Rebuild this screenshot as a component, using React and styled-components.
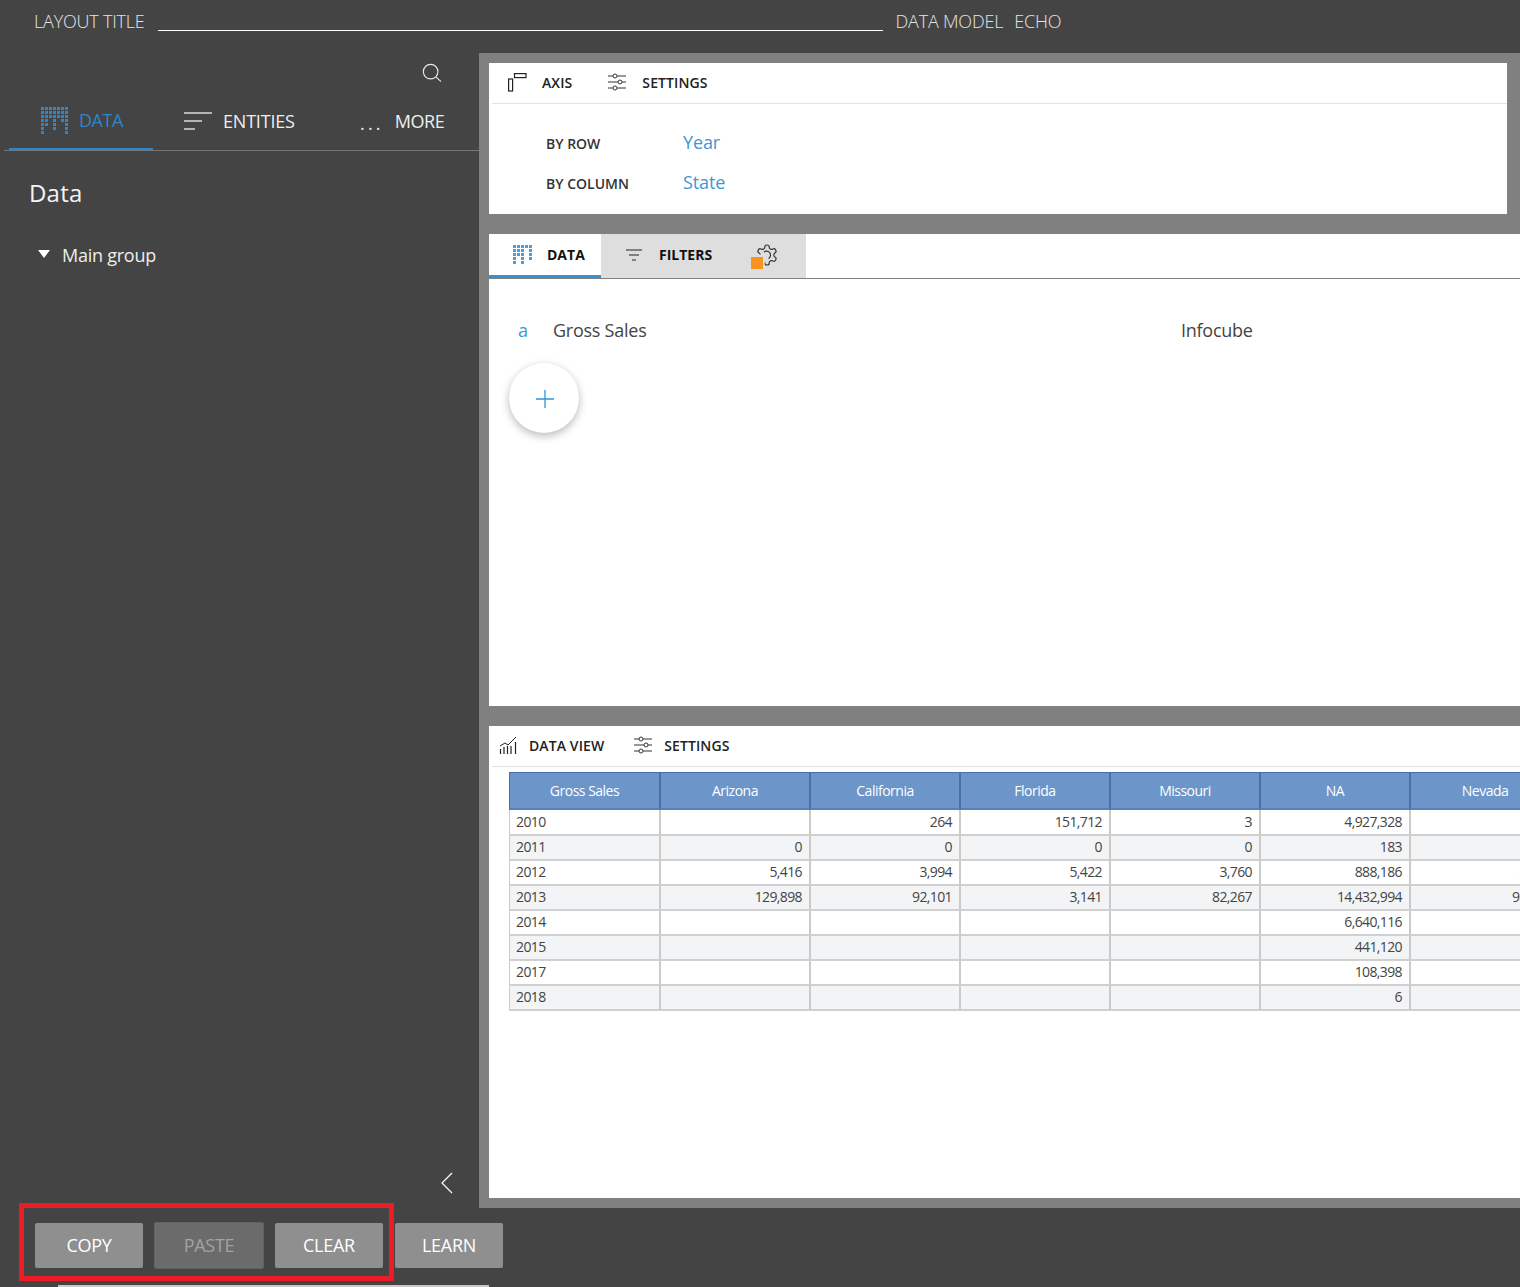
import React from "react";
import styled, { createGlobalStyle } from "styled-components";

const GlobalStyle = createGlobalStyle`
  html, body {
    margin: 0;
    padding: 0;
    background: #444444;
    font-family: "Open Sans", "Liberation Sans", sans-serif;
  }
  * {
    box-sizing: border-box;
  }
`;

const Page = styled.div`
  width: 1520px;
  height: 1287px;
  position: relative;
  overflow: hidden;
  display: flex;
  flex-direction: column;
  background: #444444;
`;

const TopBar = styled.div`
  height: 53px;
  flex: none;
  display: flex;
  align-items: flex-start;
  padding: 9px 0 0 34px;
  font-size: 18px;
  font-weight: 300;
  line-height: 24px;
  letter-spacing: -0.2px;
  color: #e4e4e4;
`;

const TitleInput = styled.div`
  width: 725px;
  height: 22px;
  margin: 0 13px 0 13px;
  border-bottom: 1px solid #ffffff;
`;

const ModelName = styled.span`
  margin-left: 11px;
`;

const Middle = styled.div`
  height: 1155px;
  flex: none;
  display: flex;
`;

const Sidebar = styled.div`
  width: 479px;
  flex: none;
  display: flex;
  flex-direction: column;
  color: #ffffff;
`;

const SearchRow = styled.div`
  height: 47px;
  flex: none;
  display: flex;
  justify-content: flex-end;
  padding: 10px 37px 0 0;
`;

const SideTabs = styled.div`
  height: 51px;
  flex: none;
  margin-left: 4px;
  display: flex;
  border-bottom: 1px solid #757575;
`;

const SideTab = styled.div`
  height: 50px;
  width: ${(p) => p.$width}px;
  flex: none;
  display: flex;
  align-items: center;
  gap: ${(p) => p.$gap}px;
  margin-left: ${(p) => p.$left || 0}px;
  padding: 0 0 8px ${(p) => p.$pad}px;
  font-size: 18px;
  letter-spacing: ${(p) => p.$spacing || -0.45}px;
  color: ${(p) => (p.$active ? "#2e86c9" : "#eeeeee")};
  border-bottom: ${(p) => (p.$active ? "2px solid #2e86c9" : "none")};
`;

const Dots = styled.span`
  font-size: 18px;
  letter-spacing: 3.2px;
  line-height: 18px;
  padding-top: 4px;
  color: #eeeeee;
`;

const SideHeading = styled.div`
  margin: 25px 0 0 29px;
  font-size: 24px;
  line-height: 33px;
  letter-spacing: 0.2px;
  color: #f4f4f4;
`;

const TreeRow = styled.div`
  margin: 34px 0 0 38px;
  display: flex;
  align-items: center;
  gap: 12px;
  font-size: 18px;
  line-height: 24px;
  letter-spacing: -0.25px;
  color: #eeeeee;
`;

const Caret = styled.span`
  width: 0;
  height: 0;
  margin-bottom: 2px;
  border-left: 6px solid transparent;
  border-right: 6px solid transparent;
  border-top: 8px solid #ffffff;
`;

const CollapseRow = styled.div`
  margin-top: auto;
  height: 37px;
  display: flex;
  justify-content: flex-end;
  padding: 0 25px 0 0;
`;

const Workspace = styled.div`
  flex: 1;
  min-width: 0;
  display: flex;
  flex-direction: column;
  gap: 20px;
  padding: 10px 0 10px 10px;
  background: #808080;
  overflow: hidden;
`;

const Panel = styled.div`
  flex: none;
  height: ${(p) => p.$height}px;
  width: ${(p) => p.$width}px;
  background: #ffffff;
  color: #333333;
`;

const PanelBar = styled.div`
  height: 41px;
  margin-left: 3px;
  display: flex;
  align-items: center;
  padding: 0 0 2px ${(p) => p.$pad}px;
  border-bottom: 1px solid #e2e2e2;
`;

const BarItem = styled.div`
  display: flex;
  align-items: center;
  gap: ${(p) => p.$gap}px;
  margin-right: ${(p) => p.$right || 0}px;
  font-size: 14px;
  font-weight: 600;
  letter-spacing: 0.1px;
  color: #222222;
`;

const AxisGrid = styled.div`
  display: grid;
  grid-template-columns: 137px auto;
  grid-auto-rows: 40px;
  justify-content: start;
  align-items: center;
  padding: 18px 0 0 57px;
`;

const AxisLabel = styled.div`
  font-size: 14px;
  font-weight: 600;
  color: #333333;
  padding-top: 2px;
`;

const AxisValue = styled.div`
  font-size: 18px;
  color: #3f96d6;
  letter-spacing: -0.1px;
`;

const TabStrip = styled.div`
  height: 45px;
  display: flex;
  border-bottom: 1px solid #808080;
`;

const DataTab = styled.div`
  width: 112px;
  height: 44px;
  display: flex;
  align-items: center;
  gap: 15px;
  padding-left: 24px;
  font-size: 14px;
  font-weight: 700;
  color: #111111;
  border-bottom: 3px solid #3a8fd0;
`;

const GreyTabs = styled.div`
  width: 205px;
  height: 44px;
  display: flex;
  align-items: center;
  gap: 17px;
  padding: 0 0 3px 25px;
  background: #dedede;
  font-size: 14px;
  font-weight: 700;
  color: #111111;
`;

const GearWrap = styled.div`
  position: relative;
  width: 30px;
  height: 30px;
  margin-left: 21px;
`;

const GearGlyph = styled.svg`
  position: absolute;
  left: 5px;
  top: 3px;
`;

const OrangeBadge = styled.span`
  position: absolute;
  left: 1px;
  bottom: 1px;
  width: 12px;
  height: 12px;
  background: #f7941d;
`;

const DataRow = styled.div`
  display: flex;
  align-items: center;
  height: 24px;
  margin-top: 39px;
  padding-left: 29px;
  font-size: 18px;
  letter-spacing: -0.25px;
  color: #444444;
`;

const RowLetter = styled.span`
  width: 35px;
  color: #3f96d6;
`;

const RowName = styled.span`
  width: 628px;
`;

const AddButton = styled.div`
  width: 70px;
  height: 70px;
  margin: 21px 0 0 20px;
  padding: 2px 0 0 2px;
  border-radius: 50%;
  background: #ffffff;
  box-shadow: 0 3px 8px rgba(0, 0, 0, 0.28);
  display: flex;
  align-items: center;
  justify-content: center;
`;

const TableWrap = styled.div`
  padding: 5px 0 0 20px;
`;

const Table = styled.table`
  border-collapse: separate;
  border-spacing: 0;
  table-layout: fixed;
  width: 1202px;
  font-size: 14px;
  letter-spacing: -0.62px;
  color: #444444;
`;

const HeadCell = styled.th`
  width: 150px;
  height: 38px;
  padding: 0 0 1px;
  border-top: 1px solid #4a6ea8;
  border-right: 2px solid #4a6ea8;
  border-bottom: 2px solid #5a80b8;
  background: #6c95c9;
  color: #ffffff;
  font-weight: 400;
  letter-spacing: -0.5px;
  text-align: center;
  overflow: hidden;
  white-space: nowrap;

  &:first-child {
    width: 152px;
    border-left: 1px solid #4a6ea8;
  }
`;

const Cell = styled.td`
  height: ${(p) => (p.$first ? 26 : 25)}px;
  padding: 0 7px 2px 6px;
  border-right: 2px solid #cbcbcb;
  border-bottom: 2px solid #d0d0d0;
  text-align: ${(p) => (p.$left ? "left" : "right")};
  background: ${(p) => (p.$odd ? "#f3f4f6" : "#ffffff")};
  white-space: nowrap;

  &:first-child {
    border-left: 1px solid #cbcbcb;
  }
`;

const BottomBar = styled.div`
  height: 79px;
  flex: none;
  display: flex;
  padding: 15px 0 0 35px;
  gap: 11px;
  position: relative;
`;

const ActionButton = styled.div`
  width: ${(p) => (p.$disabled ? 110 : 108)}px;
  height: ${(p) => (p.$disabled ? 47 : 45)}px;
  margin-top: ${(p) => (p.$disabled ? -1 : 0)}px;
  margin-right: ${(p) => p.$right || 0}px;
  display: flex;
  align-items: center;
  justify-content: center;
  padding-bottom: 2px;
  border-radius: 2px;
  font-size: 18px;
  letter-spacing: -0.25px;
  background: ${(p) => (p.$disabled ? "#6b6b6b" : "#8f8f8f")};
  color: ${(p) => (p.$disabled ? "#a3a3a3" : "#ffffff")};
  border: ${(p) => (p.$disabled ? "1px solid #626262" : "none")};
`;

const Highlight = styled.div`
  position: absolute;
  left: 19px;
  top: -5px;
  width: 375px;
  height: 78px;
  border: 5px solid #ed1c24;
  pointer-events: none;
`;

const BottomEdge = styled.div`
  position: absolute;
  left: 58px;
  bottom: 0;
  width: 431px;
  height: 2px;
  background: #c9c9c9;
`;

const bigDots = [
  "1111111",
  "1111111",
  "1111111",
  "1101011",
  "1101001",
  "1001001",
  "1000001",
];

const smallDots = [
  "11111",
  "11101",
  "11101",
  "10101",
  "10100",
];

function DotGrid({ rows, color }) {
  const dots = [];
  rows.forEach((row, y) =>
    row.split("").forEach((on, x) => {
      if (on === "1") {
        dots.push(<rect key={x + "-" + y} x={x * 4} y={y * 4} width="3" height="3" fill={color} />);
      }
    })
  );
  const size = rows.length * 4 - 1;
  return (
    <svg width={size} height={size} viewBox={`0 0 ${size} ${size}`}>
      {dots}
    </svg>
  );
}

const SearchIcon = () => (
  <svg width="20" height="20" viewBox="0 0 22 22" fill="none" stroke="#e8e8e8" strokeWidth="1.2">
    <circle cx="9.5" cy="9.5" r="8" />
    <path d="M15.5 15.5l5.5 5" />
  </svg>
);

const EntitiesIcon = () => (
  <svg width="28" height="18" viewBox="0 0 28 18" stroke="#d8d8d8" strokeWidth="1.3">
    <path d="M0 1h28M0 9h18M0 17h11" />
  </svg>
);

const AxisIcon = () => (
  <svg width="19" height="19" viewBox="0 0 19 19" fill="none" stroke="#222" strokeWidth="1.2">
    <rect x="6.5" y="0.6" width="11.5" height="4" />
    <rect x="0.6" y="6" width="4" height="12" />
  </svg>
);

const SlidersIcon = () => (
  <svg width="18" height="18" viewBox="0 0 18 18" fill="none" stroke="#333" strokeWidth="1">
    <path d="M0 3h5M9 3h9M0 9h10M14 9h4M0 15h5M9 15h9" />
    <circle cx="7" cy="3" r="2" />
    <circle cx="12" cy="9" r="2" />
    <circle cx="7" cy="15" r="2" />
  </svg>
);

const FilterIcon = () => (
  <svg width="16" height="12" viewBox="0 0 16 12" stroke="#222" strokeWidth="1.2">
    <path d="M0 1h16M3 6h10M6 11h4" />
  </svg>
);

const GearIcon = () => (
  <GearGlyph width="24" height="24" viewBox="0 0 24 24" fill="none" stroke="#333" strokeWidth="1.2">
    <defs>
      <clipPath id="gear-cut">
        <path d="M0 0H24V24H9L11 13 3 11 0 11z" />
      </clipPath>
    </defs>
    <g clipPath="url(#gear-cut)">
      <path d="M12.22 2h-.44a2 2 0 0 0-2 2v.18a2 2 0 0 1-1 1.73l-.43.25a2 2 0 0 1-2 0l-.15-.08a2 2 0 0 0-2.73.73l-.22.38a2 2 0 0 0 .73 2.73l.15.1a2 2 0 0 1 1 1.72v.51a2 2 0 0 1-1 1.74l-.15.09a2 2 0 0 0-.73 2.73l.22.38a2 2 0 0 0 2.73.73l.15-.08a2 2 0 0 1 2 0l.43.25a2 2 0 0 1 1 1.73V20a2 2 0 0 0 2 2h.44a2 2 0 0 0 2-2v-.18a2 2 0 0 1 1-1.73l.43-.25a2 2 0 0 1 2 0l.15.08a2 2 0 0 0 2.73-.73l.22-.39a2 2 0 0 0-.73-2.73l-.15-.08a2 2 0 0 1-1-1.74v-.5a2 2 0 0 1 1-1.74l.15-.09a2 2 0 0 0 .73-2.73l-.22-.38a2 2 0 0 0-2.73-.73l-.15.08a2 2 0 0 1-2 0l-.43-.25a2 2 0 0 1-1-1.73V4a2 2 0 0 0-2-2z" />
    </g>
    <path d="M9 9a4 4 0 0 1 6.5 3.5a4 4 0 0 1-2 3" />
  </GearGlyph>
);

const PlusIcon = () => (
  <svg width="20" height="20" viewBox="0 0 20 20" stroke="#2f93dc" strokeWidth="1.3">
    <path d="M10 1v18M1 10h18" />
  </svg>
);

const ChartIcon = () => (
  <svg width="19" height="19" viewBox="0 0 19 19" fill="none" stroke="#222" strokeWidth="1.2">
    <path d="M1.5 18v-5M5 18v-7M8.5 18v-8M12 18v-8M16.5 18V6" />
    <path d="M1 10l5-3 3 2 4-4 4-4" strokeWidth="1" />
  </svg>
);

const ChevronLeft = () => (
  <svg width="14" height="24" viewBox="0 0 14 24" fill="none" stroke="#ffffff" strokeWidth="1.2">
    <path d="M12 2L2 12l10 10" />
  </svg>
);

const columns = ["Gross Sales", "Arizona", "California", "Florida", "Missouri", "NA", "Nevada", "New York"];

const rows = [
  ["2010", "", "264", "151,712", "3", "4,927,328", "", ""],
  ["2011", "0", "0", "0", "0", "183", "", ""],
  ["2012", "5,416", "3,994", "5,422", "3,760", "888,186", "3,012", ""],
  ["2013", "129,898", "92,101", "3,141", "82,267", "14,432,994", "92,118", ""],
  ["2014", "", "", "", "", "6,640,116", "", ""],
  ["2015", "", "", "", "", "441,120", "", ""],
  ["2017", "", "", "", "", "108,398", "", ""],
  ["2018", "", "", "", "", "6", "", ""],
];

export default function App() {
  return (
    <Page>
      <GlobalStyle />
      <TopBar>
        <span>LAYOUT TITLE</span>
        <TitleInput />
        <span>DATA MODEL</span>
        <ModelName>ECHO</ModelName>
      </TopBar>

      <Middle>
        <Sidebar>
          <SearchRow>
            <SearchIcon />
          </SearchRow>
          <SideTabs>
            <SideTab $active $width={144} $pad={32} $gap={11} $left={5}>
              <DotGrid rows={bigDots} color="#2e86c9" />
              DATA
            </SideTab>
            <SideTab $width={150} $pad={31} $gap={11} $spacing={-0.2}>
              <EntitiesIcon />
              ENTITIES
            </SideTab>
            <SideTab $width={150} $pad={57} $gap={11}>
              <Dots>...</Dots>
              MORE
            </SideTab>
          </SideTabs>
          <SideHeading>Data</SideHeading>
          <TreeRow>
            <Caret />
            Main group
          </TreeRow>
          <CollapseRow>
            <ChevronLeft />
          </CollapseRow>
        </Sidebar>

        <Workspace>
          <Panel $height={151} $width={1018}>
            <PanelBar $pad={16}>
              <BarItem $gap={15} $right={36}>
                <AxisIcon />
                AXIS
              </BarItem>
              <BarItem $gap={16}>
                <SlidersIcon />
                SETTINGS
              </BarItem>
            </PanelBar>
            <AxisGrid>
              <AxisLabel>BY ROW</AxisLabel>
              <AxisValue>Year</AxisValue>
              <AxisLabel>BY COLUMN</AxisLabel>
              <AxisValue>State</AxisValue>
            </AxisGrid>
          </Panel>

          <Panel $height={472} $width={1031}>
            <TabStrip>
              <DataTab>
                <DotGrid rows={smallDots} color="#4a9edc" />
                DATA
              </DataTab>
              <GreyTabs>
                <FilterIcon />
                FILTERS
                <GearWrap>
                  <GearIcon />
                  <OrangeBadge />
                </GearWrap>
              </GreyTabs>
            </TabStrip>
            <DataRow>
              <RowLetter>a</RowLetter>
              <RowName>Gross Sales</RowName>
              <span>Infocube</span>
            </DataRow>
            <AddButton>
              <PlusIcon />
            </AddButton>
          </Panel>

          <Panel $height={472} $width={1031}>
            <PanelBar $pad={7}>
              <BarItem $gap={11} $right={30}>
                <ChartIcon />
                DATA VIEW
              </BarItem>
              <BarItem $gap={12}>
                <SlidersIcon />
                SETTINGS
              </BarItem>
            </PanelBar>
            <TableWrap>
              <Table>
                <thead>
                  <tr>
                    {columns.map((c) => (
                      <HeadCell key={c}>{c}</HeadCell>
                    ))}
                  </tr>
                </thead>
                <tbody>
                  {rows.map((row, i) => (
                    <tr key={row[0]}>
                      {row.map((v, j) => (
                        <Cell key={j} $left={j === 0} $odd={i % 2 === 1} $first={i === 0}>
                          {v}
                        </Cell>
                      ))}
                    </tr>
                  ))}
                </tbody>
              </Table>
            </TableWrap>
          </Panel>
        </Workspace>
      </Middle>

      <BottomBar>
        <ActionButton>COPY</ActionButton>
        <ActionButton $disabled>PASTE</ActionButton>
        <ActionButton $right={1}>CLEAR</ActionButton>
        <ActionButton>LEARN</ActionButton>
        <Highlight />
        <BottomEdge />
      </BottomBar>
    </Page>
  );
}
